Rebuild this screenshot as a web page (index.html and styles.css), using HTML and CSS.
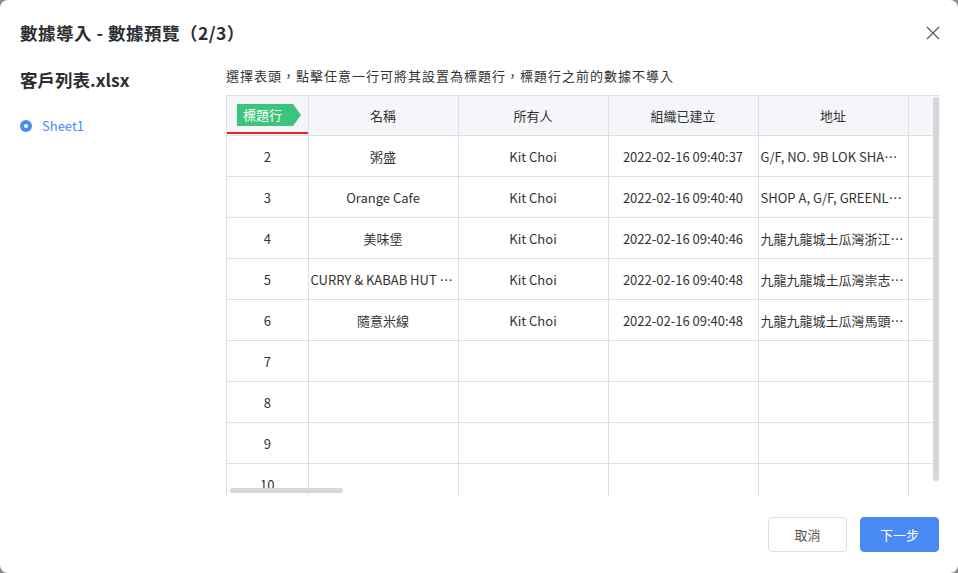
FILE: index.html
```html
<!DOCTYPE html>
<html lang="zh-Hant">
<head>
    <meta charset="UTF-8">
    <meta name="viewport" content="width=device-width, initial-scale=1.0">
    <title>數據導入 - 數據預覽</title>
    <link rel="stylesheet" href="styles.css">
</head>
<body>
    <div class="dialog">
        <div class="dialog-header">
            <h1>數據導入 - 數據預覽（2/3）</h1>
            <button class="close-btn" aria-label="關閉">
                <svg width="14" height="14" viewBox="0 0 14 14"><path d="M1 1 L13 13 M13 1 L1 13" stroke="#5c5f66" stroke-width="1.3" fill="none"/></svg>
            </button>
        </div>

        <div class="dialog-body">
            <div class="sidebar">
                <h2>客戶列表.xlsx</h2>
                <div class="sheet-item">
                    <span class="radio"></span>
                    <span>Sheet1</span>
                </div>
            </div>

            <div class="preview">
                <p class="hint">選擇表頭，點擊任意一行可將其設置為標題行，標題行之前的數據不導入</p>
                <div class="table-wrap">
                    <table class="data-table">
                        <colgroup>
                            <col style="width:81px">
                            <col style="width:150px">
                            <col style="width:150px">
                            <col style="width:150px">
                            <col style="width:150px">
                            <col style="width:150px">
                        </colgroup>
                        <thead>
                            <tr>
                                <th class="row-no">
                                    <span class="title-tag">標題行</span>
                                    <span class="title-line"></span>
                                </th>
                                <th>名稱</th>
                                <th>所有人</th>
                                <th>組織已建立</th>
                                <th>地址</th>
                                <th></th>
                            </tr>
                        </thead>
                        <tbody id="rows"></tbody>
                    </table>
                    <div class="scroll-y"></div>
                    <div class="scroll-x"></div>
                </div>
            </div>
        </div>

        <div class="dialog-footer">
            <button class="btn">取消</button>
            <button class="btn btn-primary">下一步</button>
        </div>
    </div>

    <script>
        const rows = [
            ['2', '粥盛', 'Kit Choi', '2022-02-16 09:40:37', 'G/F, NO. 9B LOK SHAN ROAD, TO KWA WAN'],
            ['3', 'Orange Cafe', 'Kit Choi', '2022-02-16 09:40:40', 'SHOP A, G/F, GREENLAND HOUSE'],
            ['4', '美味堡', 'Kit Choi', '2022-02-16 09:40:46', '九龍九龍城土瓜灣浙江街十號地下'],
            ['5', 'CURRY & KABAB HUT RESTAURANT', 'Kit Choi', '2022-02-16 09:40:48', '九龍九龍城土瓜灣崇志街二號地下'],
            ['6', '隨意米線', 'Kit Choi', '2022-02-16 09:40:48', '九龍九龍城土瓜灣馬頭角道地下'],
            ['7', '', '', '', ''],
            ['8', '', '', '', ''],
            ['9', '', '', '', ''],
            ['10', '', '', '', '']
        ];

        const tbody = document.getElementById('rows');
        rows.forEach(r => {
            const tr = document.createElement('tr');
            r.forEach((val, i) => {
                const td = document.createElement('td');
                td.textContent = val;
                if (i === 4) td.className = 'addr';
                tr.appendChild(td);
            });
            tr.appendChild(document.createElement('td'));
            tbody.appendChild(tr);
        });
    </script>
</body>
</html>
```

FILE: styles.css
```css
* {
    margin: 0;
    padding: 0;
    box-sizing: border-box;
}

body {
    background: #8a8a8a;
    font-family: "Noto Sans CJK TC", "Noto Sans", sans-serif;
    color: #333;
    width: 958px;
    height: 573px;
    overflow: hidden;
}

.dialog {
    width: 958px;
    height: 573px;
    background: #fff;
    border-radius: 8px;
    display: flex;
    flex-direction: column;
}

.dialog-header {
    display: flex;
    align-items: center;
    justify-content: space-between;
    padding: 20px 18px 20px 20px;
}

.dialog-header h1 {
    font-size: 17.5px;
    line-height: 26px;
    font-weight: bold;
    letter-spacing: 0.5px;
    color: #2b2e33;
}

.close-btn {
    background: none;
    border: none;
    width: 14px;
    height: 14px;
    cursor: pointer;
    display: flex;
}

.dialog-body {
    display: flex;
    flex: 1;
    padding: 0 18px 0 20px;
    min-height: 0;
}

.sidebar {
    width: 206px;
    flex-shrink: 0;
    padding-top: 1px;
}

.sidebar h2 {
    font-size: 17.5px;
    line-height: 26px;
    font-weight: bold;
    color: #2b2e33;
}

.sheet-item {
    display: flex;
    align-items: center;
    gap: 10px;
    margin-top: 23px;
    font-size: 13px;
    line-height: 20px;
    color: #4a8af4;
}

.radio {
    width: 12px;
    height: 12px;
    border-radius: 50%;
    background: #4a8af4;
    position: relative;
}

.radio::after {
    content: "";
    position: absolute;
    left: 4px;
    top: 4px;
    width: 4px;
    height: 4px;
    border-radius: 50%;
    background: #fff;
}

.preview {
    flex: 1;
    min-width: 0;
}

.hint {
    font-size: 13px;
    line-height: 20px;
    letter-spacing: 1px;
    color: #333;
    margin-bottom: 9px;
}

.table-wrap {
    position: relative;
    height: 401px;
    overflow: hidden;
    border-left: 1px solid #dcdfe6;
}

.data-table {
    border-collapse: collapse;
    table-layout: fixed;
    width: 831px;
    font-size: 13px;
    color: #333;
}

.data-table th,
.data-table td {
    height: 41px;
    border: 1px solid #dcdfe6;
    text-align: center;
    white-space: nowrap;
    overflow: hidden;
    text-overflow: ellipsis;
    padding: 0 2px;
    font-weight: normal;
}

.data-table tr > :first-child {
    border-left: none;
}

.data-table th {
    background: #f5f6fa;
    height: 40px;
}

.data-table td.addr {
    text-align: left;
}

.row-no {
    position: relative;
}

.title-tag {
    position: absolute;
    left: 10px;
    top: 8px;
    width: 64px;
    height: 22px;
    line-height: 22px;
    padding-left: 6px;
    text-align: left;
    background: #3cc47c;
    color: #fff;
    font-size: 13px;
    clip-path: polygon(0 0, 56px 0, 64px 50%, 56px 100%, 0 100%);
}

.title-line {
    position: absolute;
    left: -4px;
    bottom: 1px;
    width: 85px;
    height: 2px;
    background: #e5202a;
}

.scroll-y {
    position: absolute;
    right: 1px;
    top: 2px;
    width: 6px;
    height: 384px;
    border-radius: 3px;
    background: #d6d7da;
}

.scroll-x {
    position: absolute;
    left: 3px;
    bottom: 3px;
    width: 113px;
    height: 5px;
    border-radius: 3px;
    background: #d6d7da;
}

.dialog-footer {
    display: flex;
    justify-content: flex-end;
    gap: 13px;
    padding: 21px 19px 21px;
}

.btn {
    width: 79px;
    height: 35px;
    border: 1px solid #dcdfe6;
    border-radius: 4px;
    background: #fff;
    color: #555;
    font-family: inherit;
    font-size: 13px;
    cursor: pointer;
}

.btn-primary {
    background: #4a8af4;
    border-color: #4a8af4;
    color: #fff;
}
```
